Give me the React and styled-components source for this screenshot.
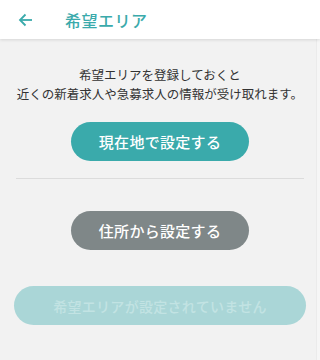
import React from 'react';
import styled, { createGlobalStyle } from 'styled-components';

const GlobalStyle = createGlobalStyle`
  html, body {
    margin: 0;
    padding: 0;
    background: #f2f2f2;
    font-family: "Noto Sans CJK JP", "Noto Sans", sans-serif;
  }
`;

const Page = styled.div`
  width: 320px;
  height: 360px;
  display: flex;
  flex-direction: column;
  background: #f2f2f2;
  overflow: hidden;
`;

const Header = styled.header`
  height: 39px;
  flex: none;
  display: flex;
  align-items: center;
  background: #fff;
  box-shadow: 0 1px 3px rgba(0, 0, 0, 0.12);
  position: relative;
  z-index: 1;
`;

const BackButton = styled.button`
  width: 50px;
  height: 30px;
  margin-left: 4px;
  padding: 0 0 0 14px;
  display: flex;
  align-items: center;
  border: none;
  background: none;
  color: #3aaaab;
`;

const Title = styled.h1`
  margin: 0 0 0 11px;
  font-size: 16px;
  font-weight: 500;
  color: #3aaaab;
  letter-spacing: 0.5px;
`;

const Body = styled.div`
  flex: 1;
  position: relative;
`;

const Main = styled.main`
  display: flex;
  flex-direction: column;
  align-items: center;
  padding: 26px 14px 0;
`;

const ScrollTrack = styled.div`
  position: absolute;
  top: 0;
  right: 0;
  bottom: 0;
  width: 3px;
  background: #f6f6f6;
  border-left: 1px solid #ebebeb;
`;

const Lead = styled.p`
  margin: 0;
  font-size: 12.5px;
  line-height: 19px;
  color: #333;
  text-align: center;
`;

const Pill = styled.button`
  width: ${(p) => (p.wide ? '100%' : '178px')};
  height: 39px;
  border: none;
  border-radius: 20px;
  font-family: inherit;
  font-size: ${(p) => (p.wide ? '14px' : '15px')};
  font-weight: 500;
  color: ${(p) => p.fg || '#fff'};
  background: ${(p) => p.bg};
  letter-spacing: 0.3px;
`;

const Divider = styled.hr`
  width: calc(100% - 4px);
  margin: 17px 0 32px;
  border: none;
  border-top: 1px solid #dcdcdc;
`;

export default function App() {
  return (
    <Page>
      <GlobalStyle />
      <Header>
        <BackButton aria-label="戻る">
          <svg width="15" height="14" viewBox="0 0 15 14" fill="none" stroke="currentColor" strokeWidth="1.8">
            <path d="M14 7H2" />
            <path d="M7.5 1.5L2 7l5.5 5.5" />
          </svg>
        </BackButton>
        <Title>希望エリア</Title>
      </Header>
      <Body>
        <Main>
          <Lead>
            希望エリアを登録しておくと
            <br />
            近くの新着求人や急募求人の情報が受け取れます。
          </Lead>
          <Pill bg="#3aaaab" style={{ marginTop: 19 }}>現在地で設定する</Pill>
          <Divider />
          <Pill bg="#7f8788">住所から設定する</Pill>
          <Pill wide bg="#aad6d7" fg="#c2e3e3" style={{ marginTop: 36 }}>
            希望エリアが設定されていません
          </Pill>
        </Main>
        <ScrollTrack />
      </Body>
    </Page>
  );
}
